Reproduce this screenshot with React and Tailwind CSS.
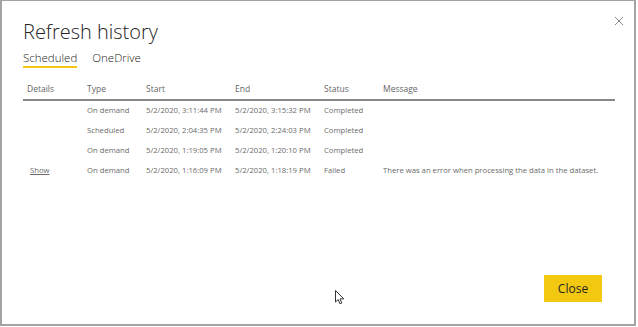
const rows = [
  { details: "", type: "On demand", start: "5/2/2020, 3:11:44 PM", end: "5/2/2020, 3:15:32 PM", status: "Completed", message: "" },
  { details: "", type: "Scheduled", start: "5/2/2020, 2:04:35 PM", end: "5/2/2020, 2:24:03 PM", status: "Completed", message: "" },
  { details: "", type: "On demand", start: "5/2/2020, 1:19:05 PM", end: "5/2/2020, 1:20:10 PM", status: "Completed", message: "" },
  {
    details: "Show",
    type: "On demand",
    start: "5/2/2020, 1:16:09 PM",
    end: "5/2/2020, 1:18:19 PM",
    status: "Failed",
    message: "There was an error when processing the data in the dataset.",
  },
];

const cols = "grid grid-cols-[60px_59px_89px_89px_59px_1fr]";

export default function App() {
  return (
    <div
      className="w-[638px] h-[327px] bg-white"
      style={{ fontFamily: '"Segoe UI", "Open Sans", sans-serif' }}
    >
      <div className="relative w-[636px] h-[326px] border-l-2 border-r-2 border-b-2 border-t border-[#a3a3a3] flex flex-col pl-[21px] pr-[19px]">
        {/* close icon */}
        <button className="absolute top-[15px] right-[10px] text-[#8a8886]">
          <svg width="10" height="10" viewBox="0 0 10 10">
            <path d="M1 1L9 9M9 1L1 9" stroke="currentColor" strokeWidth="1" />
          </svg>
        </button>

        <h1 className="mt-[17px] text-[20px] leading-[28px] font-light text-[#252423]">
          Refresh history
        </h1>

        <div className="mt-[4px] flex gap-[15px] text-[11.5px] leading-[16px] text-[#252423]">
          <span className="border-b-2 border-[#f2c811] font-light">Scheduled</span>
          <span className="font-light">OneDrive</span>
        </div>

        <div className={`${cols} mt-[11px] border-b-2 border-[#8a8886] text-[8.5px] leading-[19px] pb-[1px] text-[#666]`}>
          <span className="pl-[4px]">Details</span>
          <span className="pl-[4px]">Type</span>
          <span className="pl-[4px]">Start</span>
          <span className="pl-[4px]">End</span>
          <span className="pl-[4px]">Status</span>
          <span className="pl-[4px]">Message</span>
        </div>

        <div className="text-[7.7px] text-[#6b6b6b]">
          {rows.map((r, i) => (
            <div key={i} className={`${cols} h-[20px] leading-[18px] items-start`}>
              <span className="pl-[7px] underline">{r.details}</span>
              <span className="pl-[4px]">{r.type}</span>
              <span className="pl-[4px]">{r.start}</span>
              <span className="pl-[4px]">{r.end}</span>
              <span className="pl-[4px]">{r.status}</span>
              <span className="pl-[4px] whitespace-nowrap">{r.message}</span>
            </div>
          ))}
        </div>

        <div className="mt-auto mb-[22px] flex justify-end pr-[13px]">
          <button className="w-[58px] h-[27px] bg-[#f2c811] text-[12px] text-[#252423]">
            Close
          </button>
        </div>

        {/* mouse pointer */}
        <svg
          className="absolute left-[333px] top-[289px]"
          width="10"
          height="15"
          viewBox="0 0 10 15"
        >
          <path
            d="M0.5 0.5L0.5 12L3.2 9.6L5 13.8L6.8 13L5 8.9L8.8 8.9Z"
            fill="white"
            stroke="#333"
            strokeWidth="1"
            strokeLinejoin="round"
          />
        </svg>
      </div>
    </div>
  );
}
